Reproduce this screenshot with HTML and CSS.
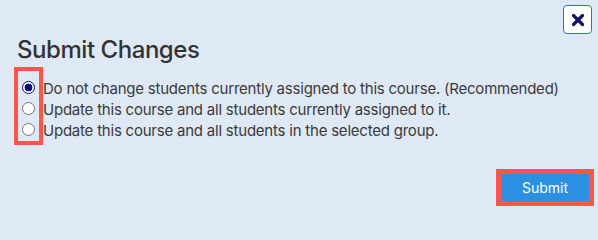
FILE: index.html
```html
<!DOCTYPE html>
<html>
<head>
<meta charset="utf-8">
<link rel="stylesheet" href="styles.css">
</head>
<body>
<div class="dialog">
  <div class="topbar">
    <button class="close" aria-label="Close">
      <svg width="14" height="14" viewBox="0 0 14 14"><path d="M2.5 2.5 L11.5 11.5 M11.5 2.5 L2.5 11.5" stroke="#141464" stroke-width="3.2" stroke-linecap="round"/></svg>
    </button>
  </div>
  <h1 class="title">Submit Changes</h1>
  <div class="options">
    <label class="option"><input type="radio" name="mode" checked><span>Do not change students currently assigned to this course. (Recommended)</span></label>
    <label class="option"><input type="radio" name="mode"><span>Update this course and all students currently assigned to it.</span></label>
    <label class="option"><input type="radio" name="mode"><span>Update this course and all students in the selected group.</span></label>
    <div class="highlight"></div>
  </div>
  <div class="footer">
    <button class="submit">Submit</button>
  </div>
</div>
</body>
</html>
```

FILE: styles.css
```css
html, body {
  margin: 0;
  padding: 0;
  background: #dfe9f5;
}
body {
  font-family: Inter, "Noto Sans", sans-serif;
  color: #333333;
  width: 598px;
  height: 214px;
  overflow: hidden;
}
.dialog {
  padding: 5px 6px 0 17px;
}
.topbar {
  display: flex;
  justify-content: flex-end;
  height: 30px;
}
.close {
  width: 29px;
  height: 29px;
  padding: 0;
  margin: 0;
  background: #ffffff;
  border: 1px solid #2a6fd6;
  border-radius: 4px;
  display: flex;
  align-items: center;
  justify-content: center;
}
.title {
  margin: 0;
  font-size: 24px;
  font-weight: 500;
  letter-spacing: -0.45px;
  line-height: 29px;
  color: #333333;
}
.options {
  position: relative;
  margin-top: 13px;
  margin-left: -17px;
}
.option {
  display: flex;
  align-items: center;
  height: 21px;
  font-size: 15px;
  letter-spacing: -0.22px;
  color: #3a3a3a;
}
.option span {
  position: relative;
  top: 1px;
}
.option input {
  appearance: none;
  -webkit-appearance: none;
  width: 13px;
  height: 13px;
  margin: 0 8px 0 22px;
  border: 1px solid #767676;
  border-radius: 50%;
  background: #ffffff;
  box-sizing: border-box;
}
.option input:checked {
  border: 1px solid #0a0a80;
  background: radial-gradient(circle, #0a0a80 0 3.6px, #ffffff 4.2px);
}
.highlight {
  position: absolute;
  left: 14px;
  top: -10px;
  width: 21px;
  height: 70px;
  border: 4px solid #ff5449;
  pointer-events: none;
}
.footer {
  display: flex;
  justify-content: flex-end;
  margin-top: 34px;
  padding-right: 3px;
}
.submit {
  width: 88px;
  height: 27px;
  background: #2b90e2;
  color: #ffffff;
  border: none;
  font-family: Inter, "Noto Sans", sans-serif;
  font-size: 14px;
  outline: 5px solid #ff5449;
  padding: 0;
}
```
